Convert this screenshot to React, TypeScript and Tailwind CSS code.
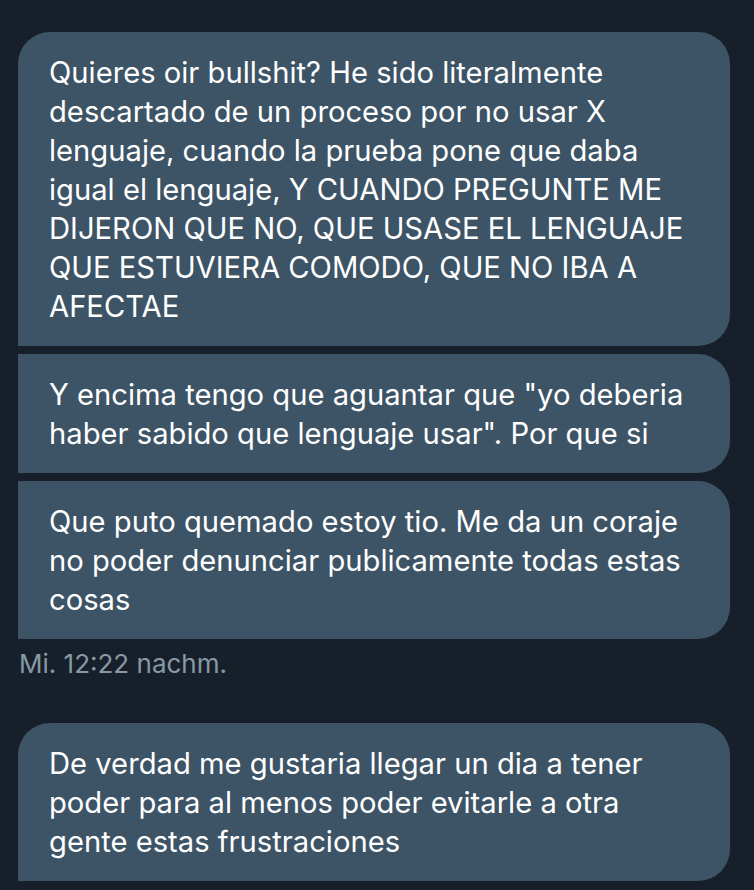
const font = { fontFamily: 'Inter, "Liberation Sans", Arial, sans-serif' };

type Bubble = { lines: string[]; corners: string };

const first: Bubble[] = [
  {
    lines: [
      "Quieres oir bullshit? He sido literalmente",
      "descartado de un proceso por no usar X",
      "lenguaje, cuando la prueba pone que daba",
      "igual el lenguaje, Y CUANDO PREGUNTE ME",
      "DIJERON QUE NO, QUE USASE EL LENGUAJE",
      "QUE ESTUVIERA COMODO, QUE NO IBA A",
      "AFECTAE",
    ],
    corners: "rounded-tl-[32px] rounded-r-[32px]",
  },
  {
    lines: [
      'Y encima tengo que aguantar que "yo deberia',
      'haber sabido que lenguaje usar". Por que si',
    ],
    corners: "rounded-r-[32px]",
  },
  {
    lines: [
      "Que puto quemado estoy tio. Me da un coraje",
      "no poder denunciar publicamente todas estas",
      "cosas",
    ],
    corners: "rounded-r-[32px]",
  },
];

const second: Bubble[] = [
  {
    lines: [
      "De verdad me gustaria llegar un dia a tener",
      "poder para al menos poder evitarle a otra",
      "gente estas frustraciones",
    ],
    corners: "rounded-tl-[32px] rounded-r-[32px]",
  },
];

function Message({ b }: { b: Bubble }) {
  return (
    <div
      className={`w-[712px] bg-[#3d5466] pl-[31px] pr-[20px] pt-[21px] pb-[20px] text-[29.2px] leading-[39px] text-white ${b.corners}`}
    >
      {b.lines.map((l, i) => (
        <div key={i} className="whitespace-nowrap">
          {l}
        </div>
      ))}
    </div>
  );
}

export default function App() {
  return (
    <div className="h-[890px] w-[754px] overflow-hidden bg-[#17202a] pl-[18px] pt-[32px]" style={font}>
      <div className="flex flex-col gap-[8px]">
        {first.map((b, i) => (
          <Message key={i} b={b} />
        ))}
      </div>
      <div className="mt-[10px] pl-[1px] text-[26px] leading-[30px] text-[#8899a6]">Mi. 12:22 nachm.</div>
      <div className="mt-[44px] flex flex-col gap-[8px]">
        {second.map((b, i) => (
          <Message key={i} b={b} />
        ))}
      </div>
    </div>
  );
}
